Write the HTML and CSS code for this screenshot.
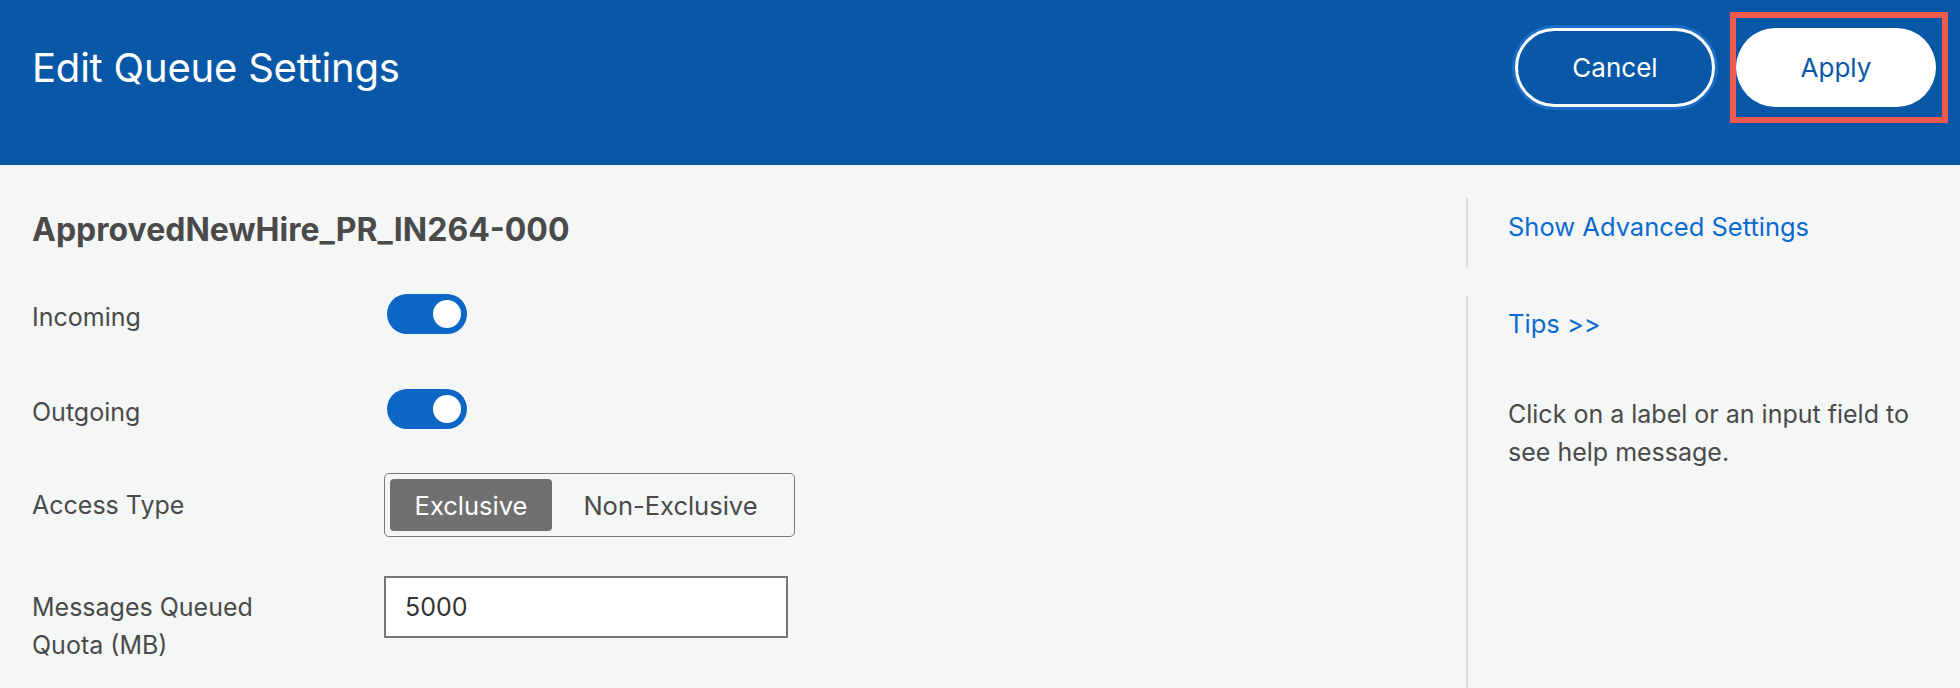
FILE: index.html
```html
<!DOCTYPE html>
<html lang="en">
<head>
<meta charset="utf-8">
<title>Edit Queue Settings</title>
<link rel="stylesheet" href="styles.css">
</head>
<body>
<header class="topbar">
  <h1 class="topbar-title">Edit Queue Settings</h1>
  <div class="topbar-actions">
    <button class="btn btn-outline">Cancel</button>
    <span class="highlight">
      <button class="btn btn-solid">Apply</button>
    </span>
  </div>
</header>
<div class="content">
  <main class="main">
    <h2 class="queue-name">ApprovedNewHire_PR_IN264-000</h2>
    <div class="form">
      <div class="row row-incoming">
        <label class="label label-switch">Incoming</label>
        <span class="toggle on"><span class="knob"></span></span>
      </div>
      <div class="row row-outgoing">
        <label class="label label-switch">Outgoing</label>
        <span class="toggle on"><span class="knob"></span></span>
      </div>
      <div class="row row-access">
        <label class="label">Access Type</label>
        <div class="segmented">
          <span class="seg seg-first active">Exclusive</span>
          <span class="seg seg-second">Non-Exclusive</span>
        </div>
      </div>
      <div class="row row-quota">
        <label class="label label-top">Messages Queued<br>Quota (MB)</label>
        <div class="input">5000</div>
      </div>
    </div>
  </main>
  <aside class="side">
    <div class="side-block side-advanced">
      <a class="link">Show Advanced Settings</a>
    </div>
    <div class="side-block side-tips">
      <a class="link">Tips &gt;&gt;</a>
      <p class="help">Click on a label or an input field to see help message.</p>
    </div>
  </aside>
</div>
</body>
</html>
```
FILE: styles.css
```css
* { box-sizing: border-box; }
html, body { margin: 0; padding: 0; }
body {
  width: 1960px;
  height: 688px;
  overflow: hidden;
  background: #f5f7f7;
  font-family: "Inter", "Liberation Sans", sans-serif;
  color: #4a4a4a;
}
.topbar {
  height: 165px;
  background: #0958a8;
  display: flex;
  align-items: center;
  justify-content: space-between;
  padding: 0 24px 31px 32px;
}
.topbar-title {
  margin: 0;
  color: #ffffff;
  font-size: 40px;
  font-weight: 400;
  letter-spacing: -0.2px;
}
.topbar-actions {
  display: flex;
  align-items: center;
  gap: 21px;
}
.btn {
  width: 200px;
  height: 79px;
  border-radius: 40px;
  font-family: "Inter", "Liberation Sans", sans-serif;
  font-size: 26px;
  cursor: pointer;
}
.btn-outline {
  background: transparent;
  color: #ffffff;
  border: 3px solid #ffffff;
  box-shadow: 0 0 0 3px #1a6cc6;
}
.btn-solid {
  background: #ffffff;
  color: #0958a8;
  border: none;
}
.highlight {
  position: relative;
  display: flex;
}
.highlight::after {
  content: "";
  position: absolute;
  left: -6px;
  right: -12px;
  top: -16px;
  bottom: -16px;
  border: 6px solid #f05a4e;
  pointer-events: none;
}
.content {
  display: flex;
  height: 523px;
}
.main {
  flex: 1;
  padding-left: 32px;
}
.queue-name {
  margin: 46px 0 0;
  height: 38px;
  line-height: 38px;
  font-size: 32px;
  font-weight: 700;
  color: #4a4a4a;
}
.form {
  margin-top: 45px;
  display: flex;
  flex-direction: column;
}
.row {
  display: grid;
  grid-template-columns: 352px auto;
  grid-template-rows: minmax(0, 1fr);
  align-items: center;
}
.row-incoming { height: 40px; }
.row-outgoing { height: 40px; margin-top: 55px; }
.row-access { height: 64px; margin-top: 44px; }
.row-quota { height: 62px; margin-top: 39px; align-items: start; }
.label {
  font-size: 25px;
  line-height: 38px;
  color: #4a4a4a;
}
.label-switch { align-self: start; margin-top: 4px; }
.label-top { margin-top: 12px; }
.toggle {
  width: 80px;
  height: 40px;
  margin-left: 3px;
  border-radius: 20px;
  background: #0b66c6;
  display: flex;
  align-items: center;
  justify-content: flex-end;
  padding-right: 6px;
}
.knob {
  width: 28px;
  height: 28px;
  border-radius: 50%;
  background: #ffffff;
}
.segmented {
  width: 411px;
  height: 64px;
  border: 1.5px solid #7a7a7a;
  border-radius: 5px;
  display: flex;
  align-items: center;
  padding: 0 5px;
}
.seg {
  height: 52px;
  display: flex;
  align-items: center;
  justify-content: center;
  font-size: 25.5px;
  color: #4a4a4a;
  border-radius: 4px;
}
.seg-first { width: 164px; }
.seg-second { width: 240px; }
.seg.active {
  background: #707070;
  color: #ffffff;
}
.input {
  width: 404px;
  height: 62px;
  background: #ffffff;
  border: 2px solid #777777;
  display: flex;
  align-items: center;
  padding-left: 19px;
  font-size: 25px;
  color: #333333;
}
.side {
  width: 494px;
  padding-top: 33px;
}
.side-block {
  border-left: 2px solid #dddddd;
  padding-left: 40px;
  padding-right: 30px;
}
.side-advanced {
  height: 70px;
  padding-top: 14px;
}
.side-tips {
  margin-top: 28px;
  height: 400px;
  padding-top: 13px;
}
.link {
  display: block;
  color: #0b6ad0;
  font-size: 25.5px;
  line-height: 30px;
  cursor: pointer;
}
.help {
  margin: 56px 0 0;
  font-size: 25px;
  line-height: 38px;
  color: #4a4a4a;
}
```
